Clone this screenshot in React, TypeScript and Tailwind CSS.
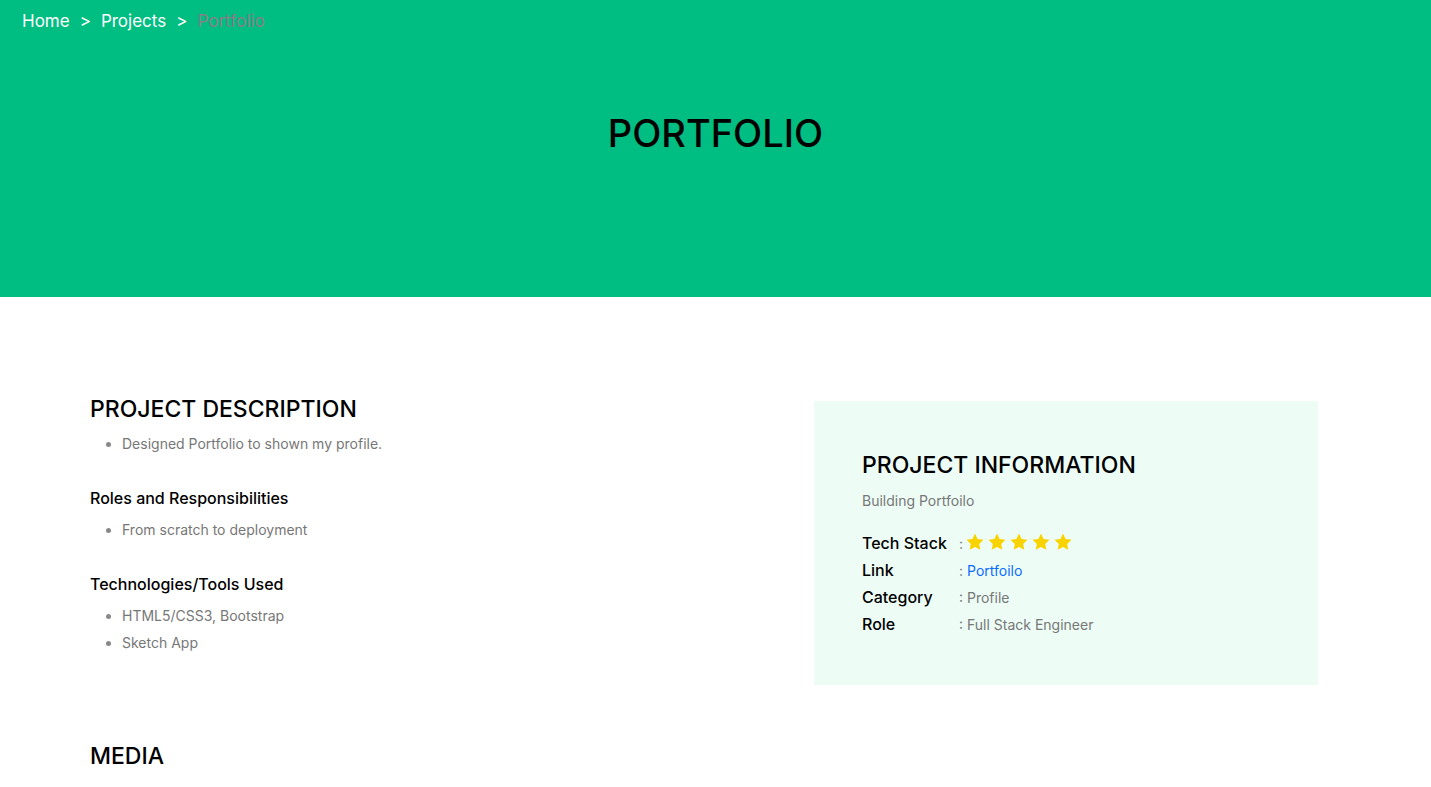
import React from "react";

const Star = () => (
  <svg width="20" height="20" viewBox="0 0 24 24" className="fill-[#f9d300]">
    <path d="M12 1.8l3.1 6.6 7.2.9-5.3 5 1.4 7.1L12 17.9l-6.4 3.5 1.4-7.1-5.3-5 7.2-.9z" />
  </svg>
);

const info = [
  { label: "Category", value: "Profile" },
  { label: "Role", value: "Full Stack Engineer" },
];

export default function App() {
  return (
    <div className="min-h-screen bg-white font-['Inter',sans-serif] text-black">
      <header className="h-[297px] bg-[#00bd81] flex flex-col">
        <nav className="flex items-center gap-[10px] pl-[22px] pt-[9px] text-[17px] text-white leading-[24px]">
          <span>Home</span>
          <span>&gt;</span>
          <span>Projects</span>
          <span>&gt;</span>
          <span className="text-[#8a7d86]">Portfolio</span>
        </nav>
        <h1 className="mt-[76px] text-center text-[38px] font-medium leading-[48px]">PORTFOLIO</h1>
      </header>

      <main className="pl-[90px] pt-[96px]">
        <div className="flex">
          <section className="w-[724px] pt-[1px]">
            <h2 className="text-[23px] font-medium leading-[30px]">PROJECT DESCRIPTION</h2>
            <ul className="mt-[9px] list-disc pl-[32px] text-[14px] text-[#777] leading-[22px] marker:text-[#888]">
              <li>Designed Portfolio to shown my profile.</li>
            </ul>
            <h3 className="mt-[31px] text-[16px] font-medium leading-[24px]">Roles and Responsibilities</h3>
            <ul className="mt-[9px] list-disc pl-[32px] text-[14px] text-[#777] leading-[22px] marker:text-[#888]">
              <li>From scratch to deployment</li>
            </ul>
            <h3 className="mt-[31px] text-[16px] font-medium leading-[24px]">Technologies/Tools Used</h3>
            <ul className="mt-[9px] list-disc pl-[32px] text-[14px] text-[#777] leading-[22px] marker:text-[#888] space-y-[5px]">
              <li>HTML5/CSS3, Bootstrap</li>
              <li>Sketch App</li>
            </ul>
          </section>

          <aside className="mt-[8px] w-[504px] h-[284px] bg-[#edfdf6] pl-[48px] pt-[49px]">
            <h2 className="text-[23px] font-medium leading-[30px]">PROJECT INFORMATION</h2>
            <p className="mt-[10px] text-[14px] text-[#777] leading-[22px]">Building Portfoilo</p>
            <div className="mt-[20px] flex flex-col gap-[5px]">
              <div className="flex items-center h-[22px]">
                <span className="w-[97px] text-[16px] font-medium">Tech Stack</span>
                <span className="text-[14px] text-[#777] mr-[2px]">:</span>
                <span className="flex gap-[2px] -mt-[2px]">
                  <Star />
                  <Star />
                  <Star />
                  <Star />
                  <Star />
                </span>
              </div>
              <div className="flex items-center h-[22px]">
                <span className="w-[97px] text-[16px] font-medium">Link</span>
                <span className="text-[14px] text-[#777]">: </span>
                <a className="ml-[4px] text-[14px] text-[#0a6cff]">Portfoilo</a>
              </div>
              {info.map((r) => (
                <div key={r.label} className="flex items-center h-[22px]">
                  <span className="w-[97px] text-[16px] font-medium">{r.label}</span>
                  <span className="text-[14px] text-[#777]">: {r.value}</span>
                </div>
              ))}
            </div>
          </aside>
        </div>

        <h2 className="mt-[56px] text-[23px] font-medium leading-[30px]">MEDIA</h2>
      </main>
    </div>
  );
}
